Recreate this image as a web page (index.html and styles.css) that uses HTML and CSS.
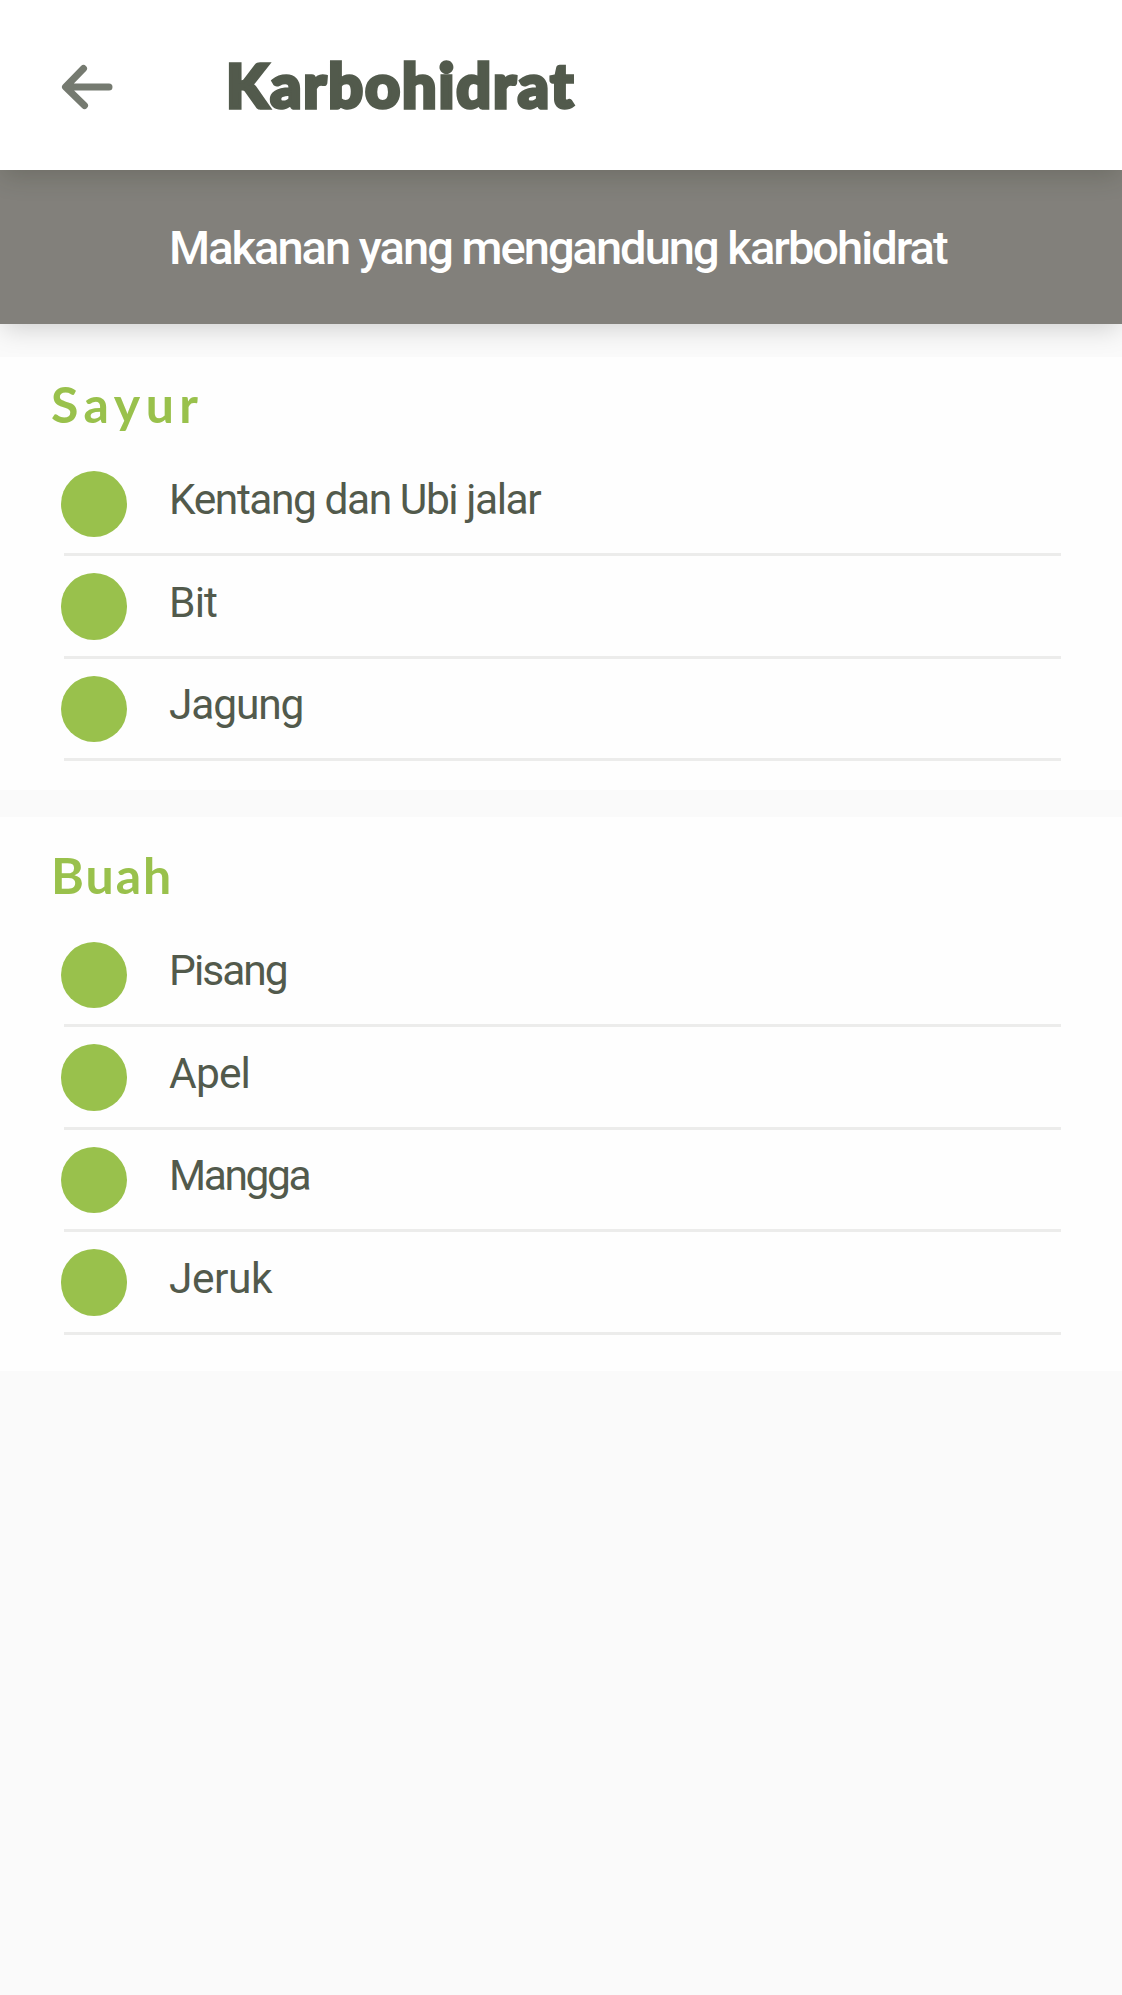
FILE: index.html
```html
<!DOCTYPE html>
<html lang="id">
<head>
<meta charset="utf-8">
<title>Karbohidrat</title>
<link rel="stylesheet" href="styles.css">
</head>
<body>
<header class="app-bar">
  <svg class="back" viewBox="0 0 52 46" aria-label="Kembali"><path d="M22.500 4.500 4.500 23 23.500 41.500M5 22.900H48" fill="none" stroke="#757a70" stroke-width="7" stroke-linecap="round" stroke-linejoin="round"/></svg>
  <h1 class="title">Karbohidrat</h1>
</header>
<div class="banner"><p class="banner-text">Makanan yang mengandung karbohidrat</p></div>
<main>
  <section class="group vegetables">
    <h2 class="group-title">Sayur</h2>
    <ul class="list">
      <li class="item"><span class="dot"></span><span class="label kentang">Kentang dan Ubi jalar</span></li>
      <li class="item"><span class="dot"></span><span class="label bit">Bit</span></li>
      <li class="item"><span class="dot"></span><span class="label jagung">Jagung</span></li>
    </ul>
  </section>
  <section class="group fruits">
    <h2 class="group-title buah">Buah</h2>
    <ul class="list">
      <li class="item"><span class="dot"></span><span class="label pisang">Pisang</span></li>
      <li class="item"><span class="dot"></span><span class="label apel">Apel</span></li>
      <li class="item"><span class="dot"></span><span class="label mangga">Mangga</span></li>
      <li class="item"><span class="dot"></span><span class="label jeruk">Jeruk</span></li>
    </ul>
  </section>
</main>
</body>
</html>
```
FILE: styles.css
```css
* { box-sizing: border-box; }
body { margin: 0; min-height: 1995px; background: #fafafa; color: #525a4c; font-family: Roboto, sans-serif; }
h1, h2, p, ul { margin: 0; padding: 0; font-weight: inherit; }
.app-bar { position: relative; z-index: 1; display: flex; align-items: center; height: 169.500px; padding: 2px 0 0 61px; background: #fff; box-shadow: 0 8px 24px -3px rgba(40, 48, 30, .24); }
.back { width: 52px; height: 46px; margin-top: 2px; }
.title { margin: -1px 0 0 113px; font: 900 61px/80px Lato, sans-serif; letter-spacing: 1.900px; -webkit-text-stroke: 3.500px #525a4c; white-space: nowrap; }
.banner { height: 154.500px; padding: 49px 0 0 169px; background: #82807b; box-shadow: 0 8px 24px -3px rgba(0, 0, 0, .17); }
.banner-text { color: #fff; font-size: 47px; line-height: 58px; font-weight: 500; letter-spacing: -1.970px; white-space: nowrap; }
.group { position: relative; background: #fefefe; }
.vegetables { margin-top: 33px; padding-bottom: 29px; }
.fruits { margin-top: 27px; padding: 10.600px 0 36px; }
.group-title { height: 96.500px; padding: 17px 0 0 51px; color: #99c14c; font: 700 50px/60px Lato, sans-serif; letter-spacing: 5.500px; }
.buah { letter-spacing: 2px; }
.list { margin: 0 60.700px 0 63.600px; list-style: none; }
.item { display: flex; align-items: flex-start; height: 102.600px; border-bottom: 3px solid #ececeb; }
.dot { flex: none; width: 66.500px; height: 66.500px; margin: 17.200px 0 0 -3px; border-radius: 50%; background: #99c14c; }
.label { margin: 21.700px 0 0 42px; font-size: 42.500px; line-height: 50px; letter-spacing: -.500px; white-space: nowrap; }
.kentang { letter-spacing: -1.450px; }
.bit, .apel { letter-spacing: -.900px; }
.jagung { letter-spacing: -1.200px; }
.pisang { letter-spacing: -2px; }
.mangga { letter-spacing: -2.400px; }
```
